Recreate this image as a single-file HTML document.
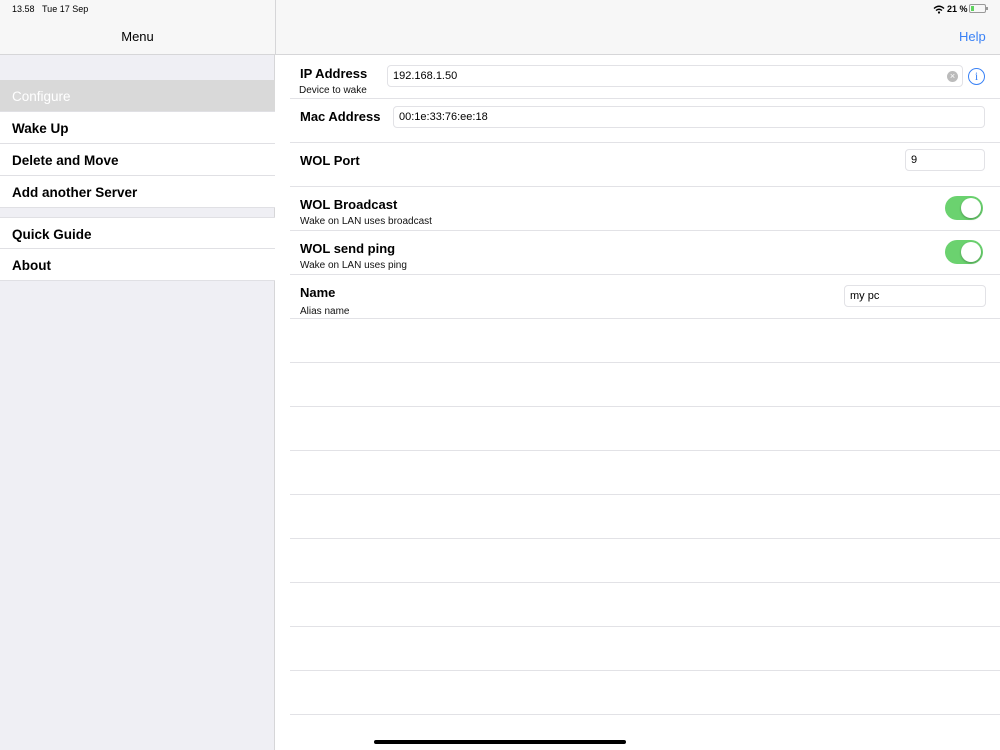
<!DOCTYPE html>
<html><head><meta charset="utf-8"><style>
*{margin:0;padding:0;box-sizing:border-box}
body{width:1000px;height:750px;overflow:hidden;background:#fff;font-family:"Liberation Sans",Arial,sans-serif;color:#000;position:relative}
.abs{position:absolute}
.bar{left:0;top:0;width:1000px;height:55px;background:#f7f7f7;border-bottom:1px solid #d6d6d8}
.side{left:0;top:55px;width:275px;height:695px;background:#efeff4;border-right:1px solid #d6d6d8}
.item{position:absolute;left:0;width:275px;height:32px;background:#fff;border-bottom:1px solid #e0e0e4;font-size:13.5px;font-weight:bold;padding:9px 0 0 12px}
.sep{position:absolute;left:290px;width:710px;height:1px;background:#e2e2e6}
.lbl{position:absolute;left:300px;font-size:13px;font-weight:bold}
.sub{position:absolute;left:300px;font-size:10px;color:#111}
.field{position:absolute;height:22px;border:1px solid #e2e2e6;border-radius:4px;background:#fff;font-size:11px;padding:4px 0 0 5px}
.tog{position:absolute;left:945px;width:38px;height:24px;border-radius:12px;background:#6bd26f}
.tog:after{content:"";position:absolute;right:2px;top:2px;width:20px;height:20px;border-radius:50%;background:#fff;box-shadow:0 1px 2px rgba(0,0,0,.3)}
</style></head><body>
<div class="abs bar"></div>
<div class="abs" style="left:12px;top:4px;font-size:9px">13.58&nbsp;&nbsp;&nbsp;Tue 17 Sep</div>
<div class="abs" style="left:0;width:275px;top:29px;text-align:center;font-size:13px">Menu</div>
<div class="abs" style="left:275px;top:0;width:1px;height:55px;background:#d6d6d8"></div>
<div class="abs" style="left:959px;top:29px;font-size:13px;color:#3a82f6">Help</div>
<svg class="abs" style="left:933px;top:5px" width="12" height="9" viewBox="0 0 12 9"><path d="M1 3.5Q6 -1 11 3.5" stroke="#000" stroke-width="1.4" fill="none"/><path d="M3 5.5Q6 3 9 5.5" stroke="#000" stroke-width="1.4" fill="none"/><circle cx="6" cy="7.5" r="1.1"/></svg>
<div class="abs" style="left:947px;top:4px;font-size:9px;font-weight:bold">21 %</div>
<div class="abs" style="left:969px;top:4px;width:17px;height:9px;border:1px solid #999;border-radius:2px"><div style="width:3px;height:5px;margin:1px;background:#5fd35f"></div></div>
<div class="abs" style="left:986px;top:7px;width:2px;height:3px;background:#999"></div>
<div class="abs side"></div>
<div class="item" style="top:80px;background:#d9d9d9;color:#fff;font-weight:normal">Configure</div>
<div class="item" style="top:112px">Wake Up</div>
<div class="item" style="top:144px">Delete and Move</div>
<div class="item" style="top:176px">Add another Server</div>
<div class="item" style="top:217px;border-top:1px solid #e0e0e4">Quick Guide</div>
<div class="item" style="top:249px">About</div>

<div class="lbl" style="top:66px">IP Address</div><div class="sub" style="left:299px;top:85px">Device to wake</div>
<div class="field" style="left:387px;top:65px;width:576px">192.168.1.50</div>
<div class="abs" style="left:947px;top:71px;width:11px;height:11px;border-radius:50%;background:#bbb;color:#fff;font-size:9px;line-height:11px;text-align:center">×</div>
<div class="abs" style="left:968px;top:68px;width:17px;height:17px;border:1.3px solid #3a82f6;border-radius:50%;color:#3a82f6;font-size:12px;line-height:15px;text-align:center;font-family:'Liberation Serif',serif">i</div>
<div class="sep" style="top:98px"></div>
<div class="lbl" style="top:109px">Mac Address</div>
<div class="field" style="left:393px;top:106px;width:592px">00:1e:33:76:ee:18</div>
<div class="sep" style="top:142px"></div>
<div class="lbl" style="top:153px">WOL Port</div>
<div class="field" style="left:905px;top:149px;width:80px">9</div>
<div class="sep" style="top:186px"></div>
<div class="lbl" style="top:197px">WOL Broadcast</div><div class="sub" style="top:216px">Wake on LAN uses broadcast</div>
<div class="tog" style="top:196px"></div>
<div class="sep" style="top:230px"></div>
<div class="lbl" style="top:241px">WOL send ping</div><div class="sub" style="top:260px">Wake on LAN uses ping</div>
<div class="tog" style="top:240px"></div>
<div class="sep" style="top:274px"></div>
<div class="lbl" style="top:285px">Name</div><div class="sub" style="top:306px">Alias name</div>
<div class="field" style="left:844px;top:285px;width:142px">my pc</div>
<div class="sep" style="top:318px"></div>
<div class="sep" style="top:362px"></div>
<div class="sep" style="top:406px"></div>
<div class="sep" style="top:450px"></div>
<div class="sep" style="top:494px"></div>
<div class="sep" style="top:538px"></div>
<div class="sep" style="top:582px"></div>
<div class="sep" style="top:626px"></div>
<div class="sep" style="top:670px"></div>
<div class="sep" style="top:714px"></div>
<div class="abs" style="left:374px;top:740px;width:252px;height:4px;border-radius:2px;background:#000"></div>
</body></html>
